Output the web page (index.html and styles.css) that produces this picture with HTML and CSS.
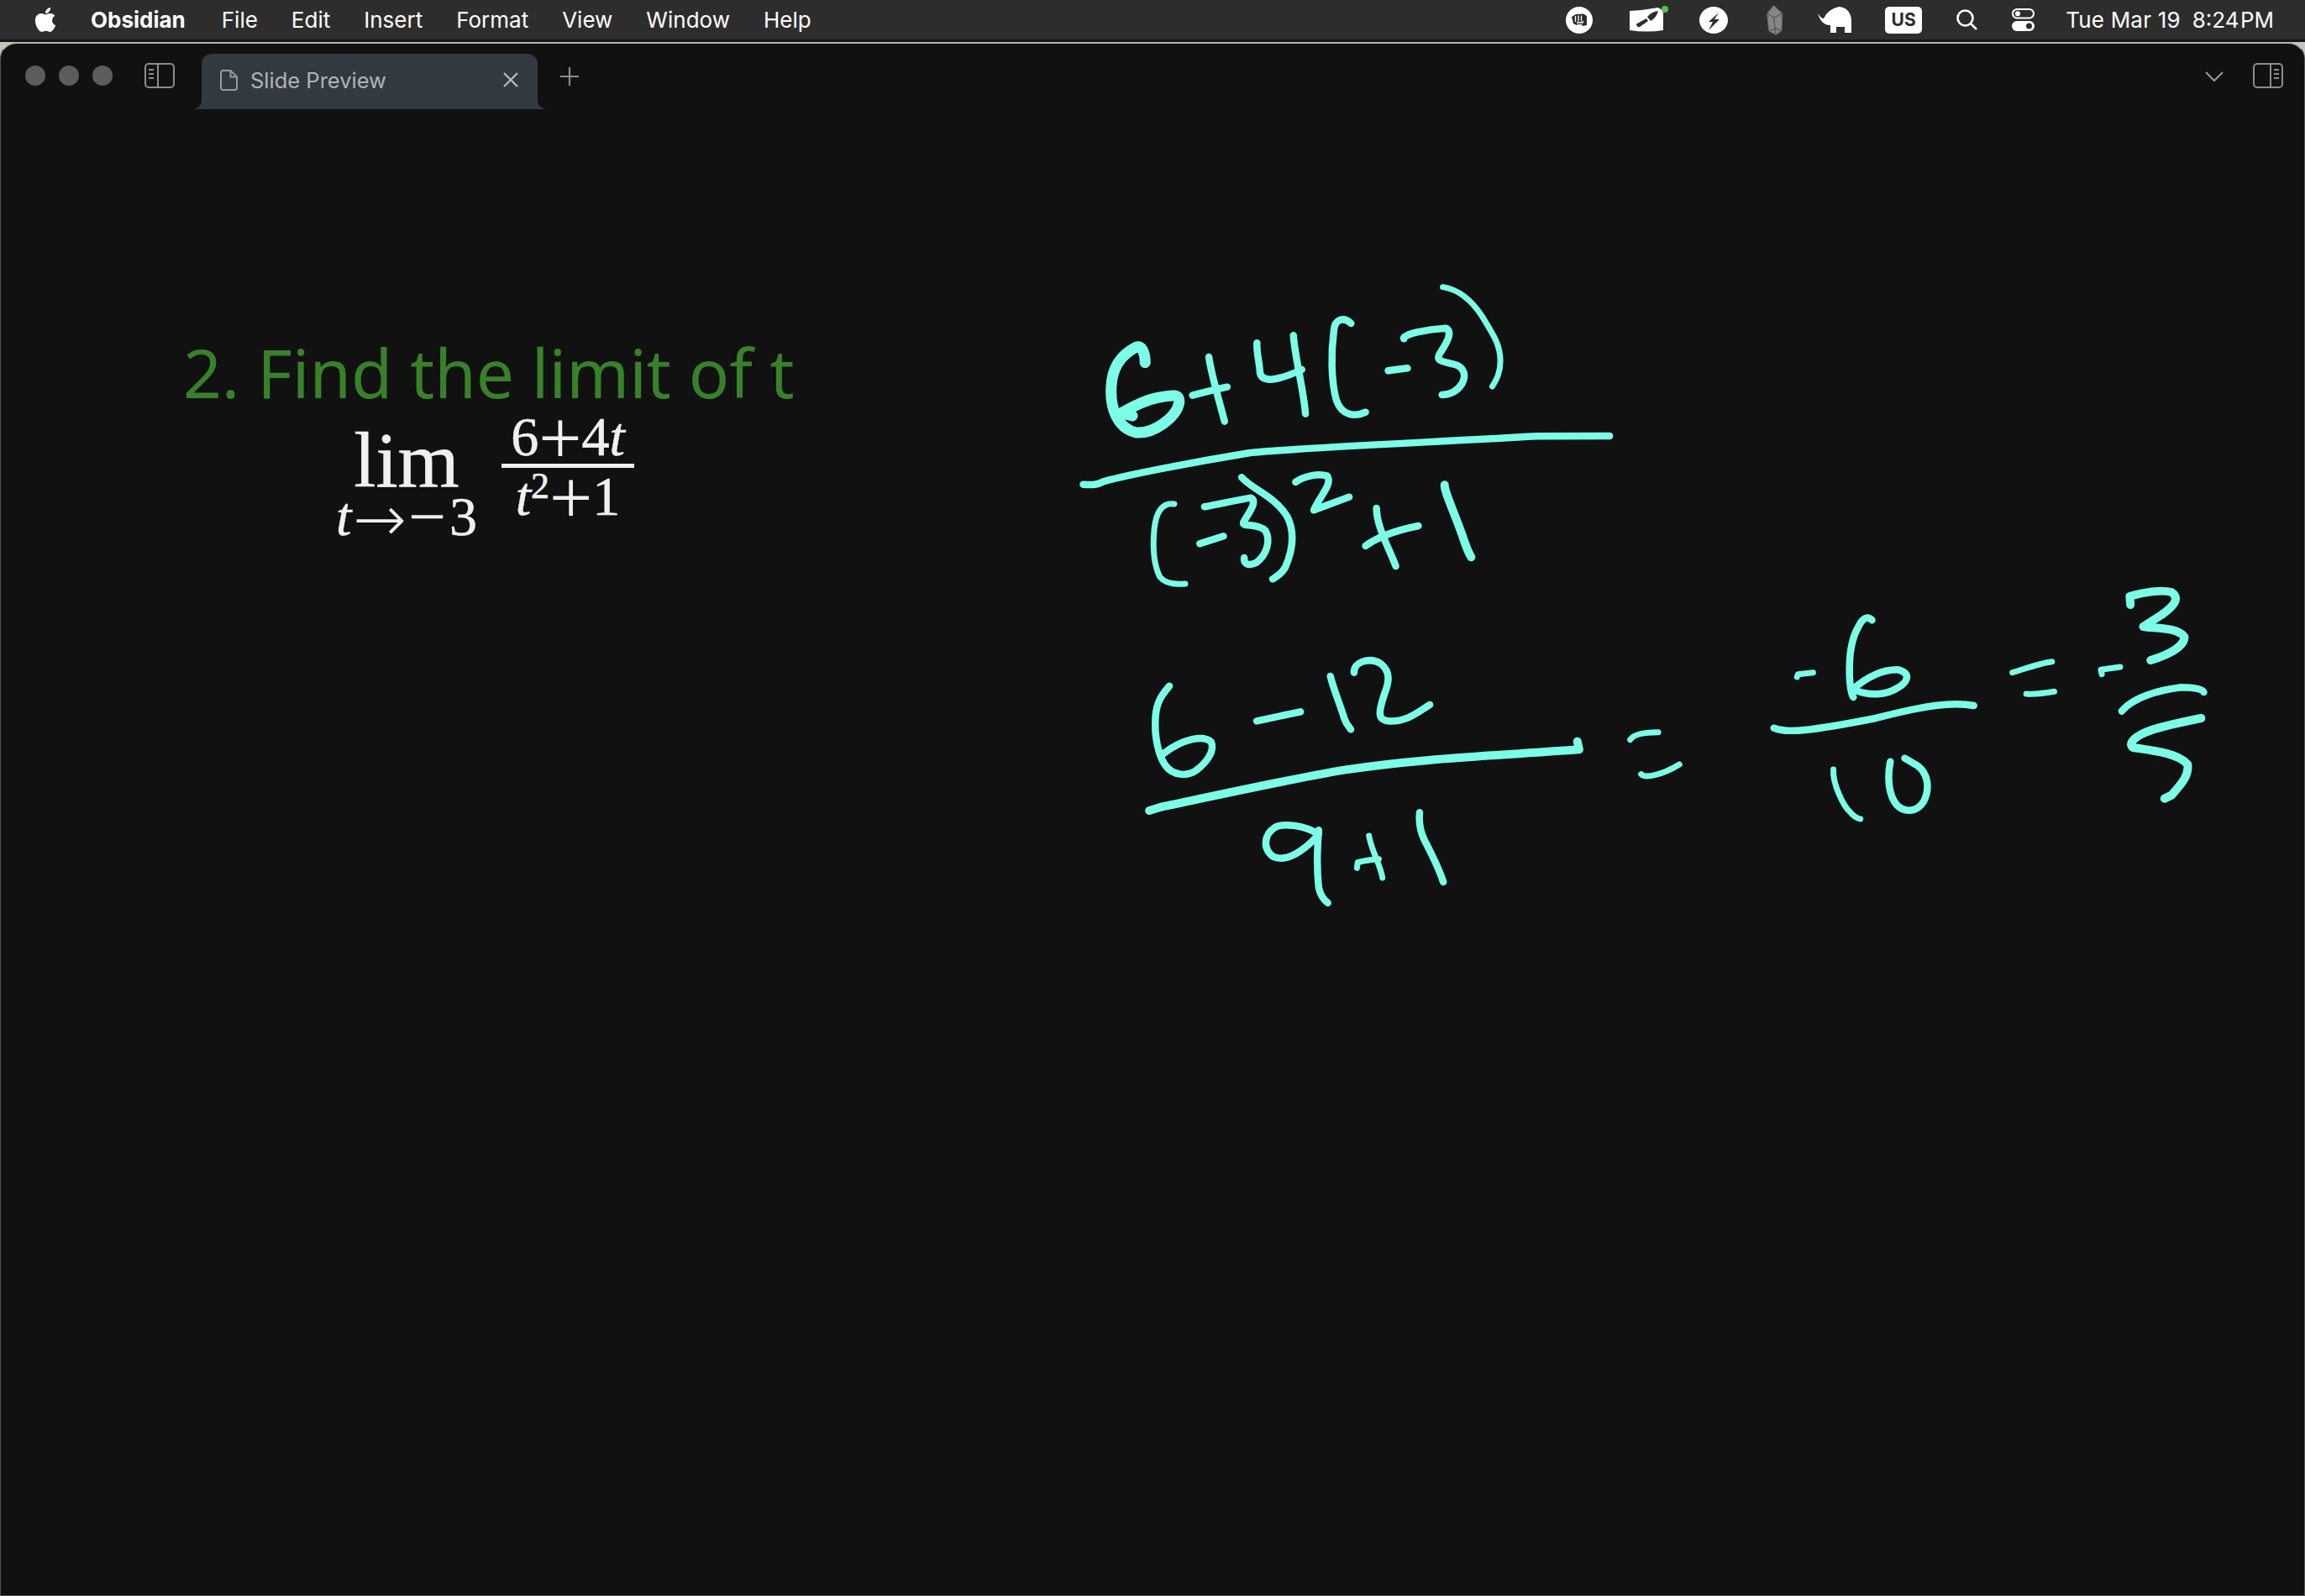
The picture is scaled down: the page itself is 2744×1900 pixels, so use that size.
FILE: index.html
```html
<!DOCTYPE html>
<html lang="en">
<head>
    <meta charset="UTF-8">
    <title>Slide Preview</title>
    <link rel="stylesheet" href="styles.css">
</head>
<body>
    <div class="menubar">
        <svg class="apple" viewBox="0 0 384 512"><path fill="#fff" d="M318.7 268.7c-.2-36.7 16.4-64.4 50-84.8-18.8-26.9-47.2-41.7-84.7-44.6-35.5-2.8-74.3 20.7-88.5 20.7-15 0-49.4-19.7-76.4-19.7C63.3 141.2 4 184.8 4 273.5q0 39.3 14.4 81.2c12.8 36.7 59 126.7 107.2 125.2 25.2-.6 43-17.9 75.8-17.9 31.8 0 48.3 17.9 76.4 17.9 48.6-.7 90.4-82.5 102.6-119.3-65.2-30.7-61.7-90-61.7-91.9zm-56.6-164.2c27.3-32.4 24.8-61.9 24-72.5-24.1 1.4-52 16.4-67.9 34.9-17.5 19.8-27.8 44.3-25.6 71.9 26.1 2 49.9-11.4 69.5-34.3z"/></svg>
        <nav class="menu">
            <span class="app-name">Obsidian</span>
            <span>File</span>
            <span>Edit</span>
            <span>Insert</span>
            <span>Format</span>
            <span>View</span>
            <span>Window</span>
            <span>Help</span>
        </nav>
        <div class="status">
            <svg class="st st-fist" viewBox="0 0 32 32"><circle cx="16" cy="16" r="16" fill="#fff"/><path fill="#2d2d2d" d="M7 12l5-3 9-.5 4 2.500v11l-5 1-1-2h-5l-1 1-4-2z"/><path stroke="#fff" stroke-width="1.300" d="M11.500 11v7M15 10.500v7M18.500 10.500v7"/><path stroke="#fff" stroke-width="1.300" fill="none" d="M13 19h7l1-2"/></svg>
            <svg class="st st-brush" viewBox="0 0 46 36"><path fill="#fff" d="M0 7Q18 6 34 3L40 7V30Q20 33 0 30z"/><path fill="#2d2d2d" d="M9 25q-2-2 0-3l11-6 2 3-10 7q-2 1-3-1zM21 14q5-6 13-7-2 8-9 12z"/><circle cx="42" cy="5" r="4" fill="#54c24f"/></svg>
            <svg class="st st-bolt" viewBox="0 0 34 32"><ellipse cx="17" cy="16" rx="17" ry="16" fill="#fff"/><path fill="#2d2d2d" d="M23 7L11 18h5l-5 10 13-13h-6z"/></svg>
            <svg class="st st-gem" viewBox="0 0 20 36"><path fill="#858585" stroke="#5a5a5a" stroke-width=".8" d="M8.500 .5l10.500 9.500-1 21-7 4.500-8.500-4.500L.5 10z"/><path fill="none" stroke="#4a4a4a" stroke-width="1" d="M.5 10l8 5 10.500-5M8.500 15l2.500 20M2.500 31l8.500-3 7 3"/></svg>
            <svg class="st st-tusk" viewBox="0 0 40 31"><path fill="#fff" d="M0 8Q4 14 7 14 12 3 25 0 38 1 40 15V31H32V24H22V31H15V22Q4 22 0 8z"/></svg>
            <span class="kbd">US</span>
            <svg class="st st-search" viewBox="0 0 25 25" fill="none" stroke="#fff" stroke-width="2.600"><circle cx="10.500" cy="10.500" r="9"/><path d="M17 17l7 7"/></svg>
            <svg class="st st-ctrl" viewBox="0 0 27 27"><rect x="1" y="1" width="25" height="10.500" rx="5.200" fill="none" stroke="#fff" stroke-width="2"/><circle cx="7" cy="6.200" r="3" fill="#fff"/><rect y="15" width="27" height="12" rx="6" fill="#fff"/><circle cx="20.500" cy="21" r="3.500" fill="#2d2d2d"/></svg>
            <span class="clock"><span class="clock-date">Tue Mar 19</span><span class="clock-time">8:24 PM</span></span>
        </div>
    </div>

    <div class="window">
        <div class="tabbar">
            <div class="lights"><i></i><i></i><i></i></div>
            <svg class="pane-icon" viewBox="0 0 36 30" fill="none" stroke="#8c8c8c" stroke-width="2"><rect x="1" y="1" width="34" height="28" rx="4"/><path d="M16 1v28M5 8h6M5 13h6M5 18h6"/></svg>
            <div class="tab">
                <svg class="file-icon" viewBox="0 0 21 25" fill="none" stroke="#9a9a9a" stroke-width="2"><path d="M3.500 1h9l7.500 7.500V21.500q0 2.500-2.500 2.500H3.500Q1 24 1 21.500V3.500Q1 1 3.500 1zM12.500 1v7.500H20"/></svg>
                <span class="tab-title">Slide Preview</span>
                <svg class="tab-close" viewBox="0 0 20 20" stroke="#bdbdbd" stroke-width="2.200"><path d="M2 2l16 16M18 2L2 18"/></svg>
            </div>
            <svg class="tab-new" viewBox="0 0 24 24" stroke="#8c8c8c" stroke-width="2.200"><path d="M12 1v22M1 12h22"/></svg>
            <div class="tabbar-right">
                <svg class="chevron" viewBox="0 0 22 14" fill="none" stroke="#9a9a9a" stroke-width="2"><path d="M1 2l10 10L21 2"/></svg>
                <svg class="pane-icon" viewBox="0 0 36 30" fill="none" stroke="#8c8c8c" stroke-width="2"><rect x="1" y="1" width="34" height="28" rx="4"/><path d="M21 1v28M25 8h6M25 13h6M25 18h6"/></svg>
            </div>
        </div>

        <section class="slide">
            <h2 class="slide-title">2. Find the limit of t</h2>
            <div class="math">
                <div class="lim">
                    <span class="lim-word">lim</span>
                    <span class="lim-under"><i>t</i><span class="arrow">→</span><span class="minus">−</span>3</span>
                </div>
                <div class="frac">
                    <span class="num">6<span class="plus">+</span>4<i>t</i></span>
                    <span class="den"><i>t</i><sup>2</sup><span class="plus">+</span>1</span>
                </div>
            </div>
        </section>

        <svg class="ink" viewBox="0 0 2744 1900">
            <g transform="translate(1270 320) scale(.4337 .3333)">
                <path class="pen-xl" d="M215 335C215 300 205 270 190 280C160 300 125 340 122 420C118 500 140 570 190 585C240 590 300 530 308 480C312 445 290 450 250 460C210 470 170 500 150 515L180 525"/>
                <path d="M390 315C395 370 420 480 433 545M345 452C380 440 410 430 440 422"/>
                <path d="M522 265C520 300 530 340 530 370C535 405 570 405 645 360M622 238C625 310 650 430 655 518"/>
                <path d="M780 195C760 170 735 180 733 220C725 300 725 400 740 470C755 525 790 530 820 512"/>
                <path d="M882 364L935 355"/>
                <path d="M925 250C920 235 990 215 1040 212C1060 225 1045 260 1025 300C1010 330 1030 330 1060 340C1095 350 1095 385 1085 410C1070 440 1050 450 1030 450"/>
                <path class="pen-s" d="M1032 65C1080 75 1115 120 1140 170C1170 235 1190 270 1190 330C1190 370 1180 395 1168 420"/>
                <path d="M45 770C70 772 85 772 100 760C170 735 350 690 500 658C620 640 1000 620 1290 598L1490 597"/>
                <path class="pen-s" d="M295 840C260 835 245 870 240 930C235 1000 240 1060 255 1100C270 1125 300 1128 325 1125"/>
                <path d="M365 982L430 955"/>
                <path d="M378 850C420 840 470 825 505 818C525 830 500 870 485 905C480 925 520 905 545 935C560 970 550 1020 520 1050C495 1065 485 1050 487 1032"/>
                <path d="M480 745C510 790 570 810 605 885C630 950 615 1020 600 1065C590 1090 575 1100 565 1108"/>
                <path d="M628 762C650 740 690 730 715 740C730 770 695 810 678 862L775 815"/>
                <path d="M850 855C850 920 885 1000 903 1062M820 990C860 950 920 930 965 918"/>
                <path class="pen-l" d="M1037 772C1035 790 1060 860 1085 950C1095 990 1100 1010 1110 1030"/>
            </g>
            <g transform="translate(1340 760) scale(.4337 .3333)">
                <path d="M120 170C105 195 85 220 82 280C78 350 90 420 110 455C130 490 170 495 195 470C225 440 245 400 235 370C215 345 160 355 100 415"/>
                <path d="M360 295L480 262"/>
                <path d="M562 135C570 180 590 240 600 285C605 305 612 315 618 325"/>
                <path d="M627 122C625 85 670 65 700 90C730 120 722 160 710 200C695 260 690 290 720 295C770 300 800 265 835 237"/>
                <path class="pen-l" d="M65 615L95 603C200 575 420 510 600 470C800 430 1000 420 1245 397L1240 368"/>
                <path d="M530 700C490 665 430 660 410 675C380 700 375 750 405 780C440 800 490 760 530 700M530 685C525 760 525 830 530 890C535 920 545 935 555 945"/>
                <path class="pen-s" d="M668 705C675 760 700 810 705 855M635 820L637 800C650 795 670 790 695 788"/>
                <path d="M807 622C805 650 805 680 820 720C840 770 860 820 872 870"/>
                <path class="pen-s" d="M1385 362C1395 340 1430 335 1462 335M1415 485C1425 500 1470 490 1520 450"/>
            </g>
            <g transform="translate(2080 680) scale(.3827 .3333)">
                <path class="pen-s" d="M155 378L158 368L205 362"/>
                <path d="M388 175C375 160 360 165 345 200C325 240 318 300 318 350C318 400 320 430 330 450M325 425C370 380 420 350 470 352C510 365 500 395 470 415C430 445 380 445 335 425"/>
                <path d="M83 560C120 580 200 570 400 525C550 480 640 465 705 480"/>
                <path class="pen-s" d="M268 708C265 760 300 840 320 860C330 875 340 882 352 885"/>
                <path d="M445 680C435 740 440 800 465 835C490 865 530 860 550 820C570 770 560 720 530 695L490 668"/>
                <path class="pen-s" d="M825 362C860 350 910 328 948 323M868 438C890 440 930 435 955 430"/>
                <path class="pen-s" d="M1103 368L1100 352L1160 342"/>
                <path class="pen-l" d="M1192 120L1190 90C1230 75 1290 65 1320 75C1350 100 1320 130 1290 155L1232 198C1270 205 1340 200 1360 235C1360 265 1320 295 1255 318"/>
                <path d="M1165 500C1200 450 1280 425 1350 415C1385 415 1415 420 1420 432"/>
                <path class="pen-l" d="M1412 525C1350 540 1280 555 1240 575C1190 600 1190 620 1200 630C1260 640 1340 650 1370 690C1375 730 1350 760 1320 800L1298 812"/>
            </g>
        </svg>
    </div>
</body>
</html>
```

FILE: styles.css
```css
* {
    box-sizing: border-box;
}
html, body {
    margin: 0;
    height: 100%;
}
body {
    background-color: #c8c6b8;
    font-family: Inter, "Liberation Sans", sans-serif;
    overflow: hidden;
}
.menubar {
    height: 50px;
    display: flex;
    align-items: center;
    padding-left: 41px;
    border-bottom: 3px solid #161616;
    background-color: #2d2d2d;
    color: #fff;
    font-size: 26px;
}
.apple {
    width: 26px;
    height: 33px;
}
.menu {
    display: flex;
    gap: 40px;
    margin-left: 41px;
}
.app-name {
    margin-right: 3px;
    font-weight: 700;
}
.status {
    display: flex;
    align-items: center;
    margin-left: auto;
    padding-right: 37px;
}
.st {
    display: block;
}
.st-fist {
    width: 32px;
    height: 32px;
    margin-right: 44px;
}
.st-brush {
    width: 46px;
    height: 36px;
    margin-right: 37px;
}
.st-bolt {
    width: 34px;
    height: 32px;
    margin-right: 46px;
}
.st-gem {
    width: 20px;
    height: 36px;
    margin-right: 41px;
}
.st-tusk {
    width: 40px;
    height: 31px;
    margin-right: 40px;
}
.kbd {
    width: 44px;
    height: 32px;
    margin-right: 41px;
    border-radius: 5px;
    background-color: #fff;
    color: #2d2d2d;
    font-size: 21px;
    font-weight: 700;
    line-height: 32px;
    text-align: center;
}
.st-search {
    width: 25px;
    height: 25px;
    margin-right: 41px;
}
.st-ctrl {
    width: 27px;
    height: 27px;
    margin-right: 37px;
}
.clock {
    display: flex;
    gap: 14px;
    white-space: nowrap;
}
.clock-date {
    letter-spacing: .2px;
}
.clock-time {
    word-spacing: -6px;
}
.window {
    position: relative;
    height: 1850px;
    border: 1px solid #55554f;
    border-top: 2px solid #b4b4ad;
    border-radius: 20px 20px 0 0;
    background-color: #111;
    overflow: hidden;
}
.tabbar {
    display: flex;
    align-items: center;
    height: 78px;
    padding: 12px 25px 0 29px;
}
.lights {
    display: flex;
    gap: 16px;
    margin-top: -14px;
}
.lights i {
    width: 24px;
    height: 24px;
    border-radius: 50%;
    background-color: #5c5c5c;
}
.pane-icon {
    width: 36px;
    height: 30px;
    margin-top: -14px;
}
.lights + .pane-icon {
    margin-left: 38px;
}
.tab {
    position: relative;
    display: flex;
    align-items: center;
    align-self: stretch;
    width: 400px;
    margin-left: 32px;
    padding: 0 22px 4px 22px;
    border-radius: 12px 12px 0 0;
    background-color: #323a41;
}
.tab::before,
.tab::after {
    content: '';
    position: absolute;
    bottom: 0;
    width: 10px;
    height: 10px;
    background: radial-gradient(circle at 0 0, #111 9.500px, #323a41 10px);
}
.tab::before {
    left: -10px;
}
.tab::after {
    right: -10px;
    transform: scaleX(-1);
}
.file-icon {
    width: 21px;
    height: 25px;
}
.tab-title {
    margin-left: 15px;
    color: #b3b3b3;
    font-size: 25.500px;
}
.tab-close {
    width: 20px;
    height: 20px;
    margin-left: auto;
}
.tab-new {
    width: 24px;
    height: 24px;
    margin: -12px 0 0 26px;
}
.tabbar-right {
    display: flex;
    align-items: center;
    gap: 35px;
    margin-left: auto;
}
.chevron {
    width: 22px;
    height: 14px;
    margin-top: -12px;
}
.slide {
    padding: 263px 0 0 217px;
}
.slide-title {
    margin: 0;
    color: #38812a;
    font-family: "Noto Sans", sans-serif;
    font-size: 80.200px;
    font-weight: 400;
    line-height: 100px;
    white-space: nowrap;
}
.math {
    display: flex;
    align-items: flex-start;
    margin: 2px 0 0 181px;
    color: #f0f0f0;
    font-family: "Liberation Serif", serif;
    -webkit-text-stroke: .6px #f0f0f0;
}
.lim {
    display: flex;
    flex-direction: column;
    align-items: center;
    width: 170px;
    margin-top: 17px;
}
.lim-word {
    font-size: 94px;
    line-height: 70px;
}
.lim-under {
    margin-top: 8px;
    font-size: 66px;
    line-height: 50px;
    white-space: nowrap;
}
.arrow {
    margin: 0 2px;
    font-family: "DejaVu Sans", sans-serif;
    font-size: 76px;
    font-weight: 200;
    line-height: 0;
    vertical-align: -7px;
    -webkit-text-stroke: 0;
}
.minus {
    margin-right: 4px;
    font-size: 80px;
    line-height: 0;
    vertical-align: -5px;
    -webkit-text-stroke: 0;
}
.frac {
    display: flex;
    flex-direction: column;
    align-items: center;
    width: 158px;
    margin-left: 28px;
    font-size: 66px;
    line-height: 50px;
}
.num {
    width: 100%;
    padding-bottom: 7px;
    border-bottom: 5px solid #f0f0f0;
    text-align: center;
}
.den {
    margin-top: 9px;
}
.plus {
    font-size: 91px;
    line-height: 0;
    vertical-align: -10px;
    -webkit-text-stroke: 0;
}
.den sup {
    font-size: 44px;
    line-height: 0;
    vertical-align: 20px;
}
.ink {
    position: absolute;
    top: -52px;
    left: -1px;
    width: 2744px;
    height: 1900px;
    fill: none;
    stroke: #7bfde8;
    stroke-linecap: round;
    stroke-linejoin: round;
}
.ink path {
    stroke-width: 8.500px;
    vector-effect: non-scaling-stroke;
}
.ink .pen-s {
    stroke-width: 7px;
}
.ink .pen-l {
    stroke-width: 10px;
}
.ink .pen-xl {
    stroke-width: 13px;
}
```
